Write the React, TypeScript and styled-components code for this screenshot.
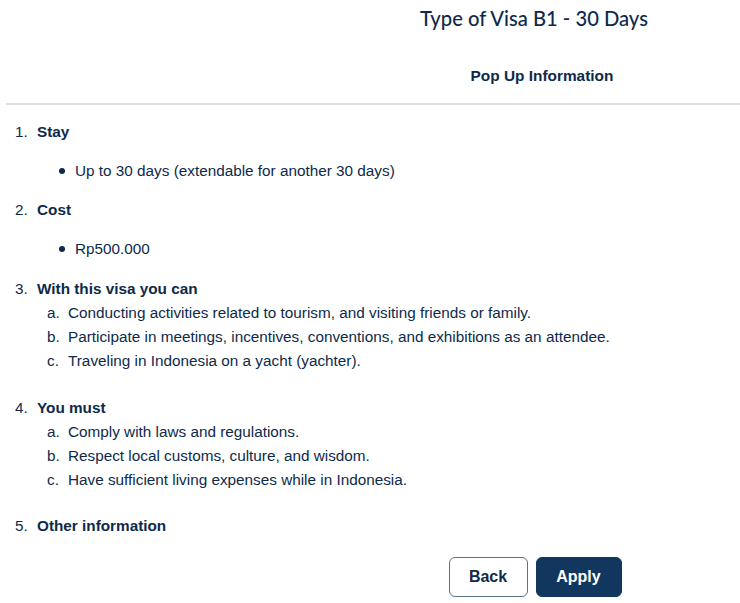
import React from "react";
import styled, { createGlobalStyle } from "styled-components";

const Global = createGlobalStyle`
  html, body { margin: 0; padding: 0; background: #ffffff; }
  body { font-family: "Liberation Sans", Arial, sans-serif; color: #0e2a4b; }
`;

const Page = styled.div`
  width: 740px;
  height: 603px;
  overflow: hidden;
  display: flex;
  flex-direction: column;
`;

const Header = styled.header`
  margin-left: 6px;
  height: 105px;
  border-bottom: 2px solid #dedede;
  display: flex;
  flex-direction: column;
  align-items: center;
  padding-left: 322px;
  box-sizing: border-box;
`;

const Title = styled.h1`
  margin: 6px 0 0;
  font-family: Lato, "Liberation Sans", sans-serif;
  font-weight: 500;
  font-size: 20.2px;
  line-height: 24px;
  color: #0e2a4b;
`;

const Subtitle = styled.h2`
  margin: 36px 0 0 16px;
  font-family: "Liberation Sans", Arial, sans-serif;
  font-weight: 700;
  font-size: 15.4px;
  line-height: 20px;
  color: #0e2a4b;
`;

const Body = styled.main`
  padding: 15px 0 0 0;
  font-size: 15.3px;
  line-height: 24px;
`;

const Item = styled.section<{ $gap: number }>`
  margin-bottom: ${(p) => p.$gap}px;
`;

const Heading = styled.div`
  display: flex;
  height: 24px;
`;

const Num = styled.span`
  width: 29px;
  padding-left: 15px;
  box-sizing: border-box;
  flex: none;
`;

const HeadText = styled.span`
  margin-left: 8px;
  font-weight: 700;
`;

const BulletList = styled.ul`
  list-style: none;
  margin: 15px 0 0;
  padding: 0 0 0 59px;
`;

const Bullet = styled.li`
  display: flex;
  align-items: center;
  height: 24px;
  &::before {
    content: "";
    width: 6px;
    height: 6px;
    border-radius: 50%;
    background: #0e2a4b;
    margin-right: 10px;
    flex: none;
  }
`;

const AlphaList = styled.ol`
  list-style: none;
  margin: 0;
  padding: 0 0 0 47px;
`;

const AlphaItem = styled.li`
  display: flex;
  height: 24px;
`;

const Letter = styled.span`
  width: 21px;
  flex: none;
`;

const Actions = styled.div`
  display: flex;
  justify-content: center;
  gap: 8px;
  margin-left: 330px;
  margin-top: 19px;
`;

const Button = styled.button<{ $primary?: boolean }>`
  height: 40px;
  padding: 0;
  width: ${(p) => (p.$primary ? "86px" : "79px")};
  border-radius: 6px;
  font-family: "Liberation Sans", Arial, sans-serif;
  font-weight: 700;
  font-size: 16px;
  cursor: pointer;
  border: 1px solid ${(p) => (p.$primary ? "#12375e" : "#5a7189")};
  background: ${(p) => (p.$primary ? "#12375e" : "#ffffff")};
  color: ${(p) => (p.$primary ? "#ffffff" : "#0e2a4b")};
`;

export default function App() {
  return (
    <Page>
      <Global />
      <Header>
        <Title>Type of Visa B1 - 30 Days</Title>
        <Subtitle>Pop Up Information</Subtitle>
      </Header>
      <Body>
        <Item $gap={15}>
          <Heading>
            <Num>1.</Num>
            <HeadText>Stay</HeadText>
          </Heading>
          <BulletList>
            <Bullet>Up to 30 days (extendable for another 30 days)</Bullet>
          </BulletList>
        </Item>
        <Item $gap={16}>
          <Heading>
            <Num>2.</Num>
            <HeadText>Cost</HeadText>
          </Heading>
          <BulletList>
            <Bullet>Rp500.000</Bullet>
          </BulletList>
        </Item>
        <Item $gap={23}>
          <Heading>
            <Num>3.</Num>
            <HeadText>With this visa you can</HeadText>
          </Heading>
          <AlphaList>
            <AlphaItem>
              <Letter>a.</Letter>Conducting activities related to tourism, and visiting friends or family.
            </AlphaItem>
            <AlphaItem>
              <Letter>b.</Letter>Participate in meetings, incentives, conventions, and exhibitions as an attendee.
            </AlphaItem>
            <AlphaItem>
              <Letter>c.</Letter>Traveling in Indonesia on a yacht (yachter).
            </AlphaItem>
          </AlphaList>
        </Item>
        <Item $gap={22}>
          <Heading>
            <Num>4.</Num>
            <HeadText>You must</HeadText>
          </Heading>
          <AlphaList>
            <AlphaItem>
              <Letter>a.</Letter>Comply with laws and regulations.
            </AlphaItem>
            <AlphaItem>
              <Letter>b.</Letter>Respect local customs, culture, and wisdom.
            </AlphaItem>
            <AlphaItem>
              <Letter>c.</Letter>Have sufficient living expenses while in Indonesia.
            </AlphaItem>
          </AlphaList>
        </Item>
        <Item $gap={0}>
          <Heading>
            <Num>5.</Num>
            <HeadText>Other information</HeadText>
          </Heading>
        </Item>
        <Actions>
          <Button>Back</Button>
          <Button $primary>Apply</Button>
        </Actions>
      </Body>
    </Page>
  );
}
